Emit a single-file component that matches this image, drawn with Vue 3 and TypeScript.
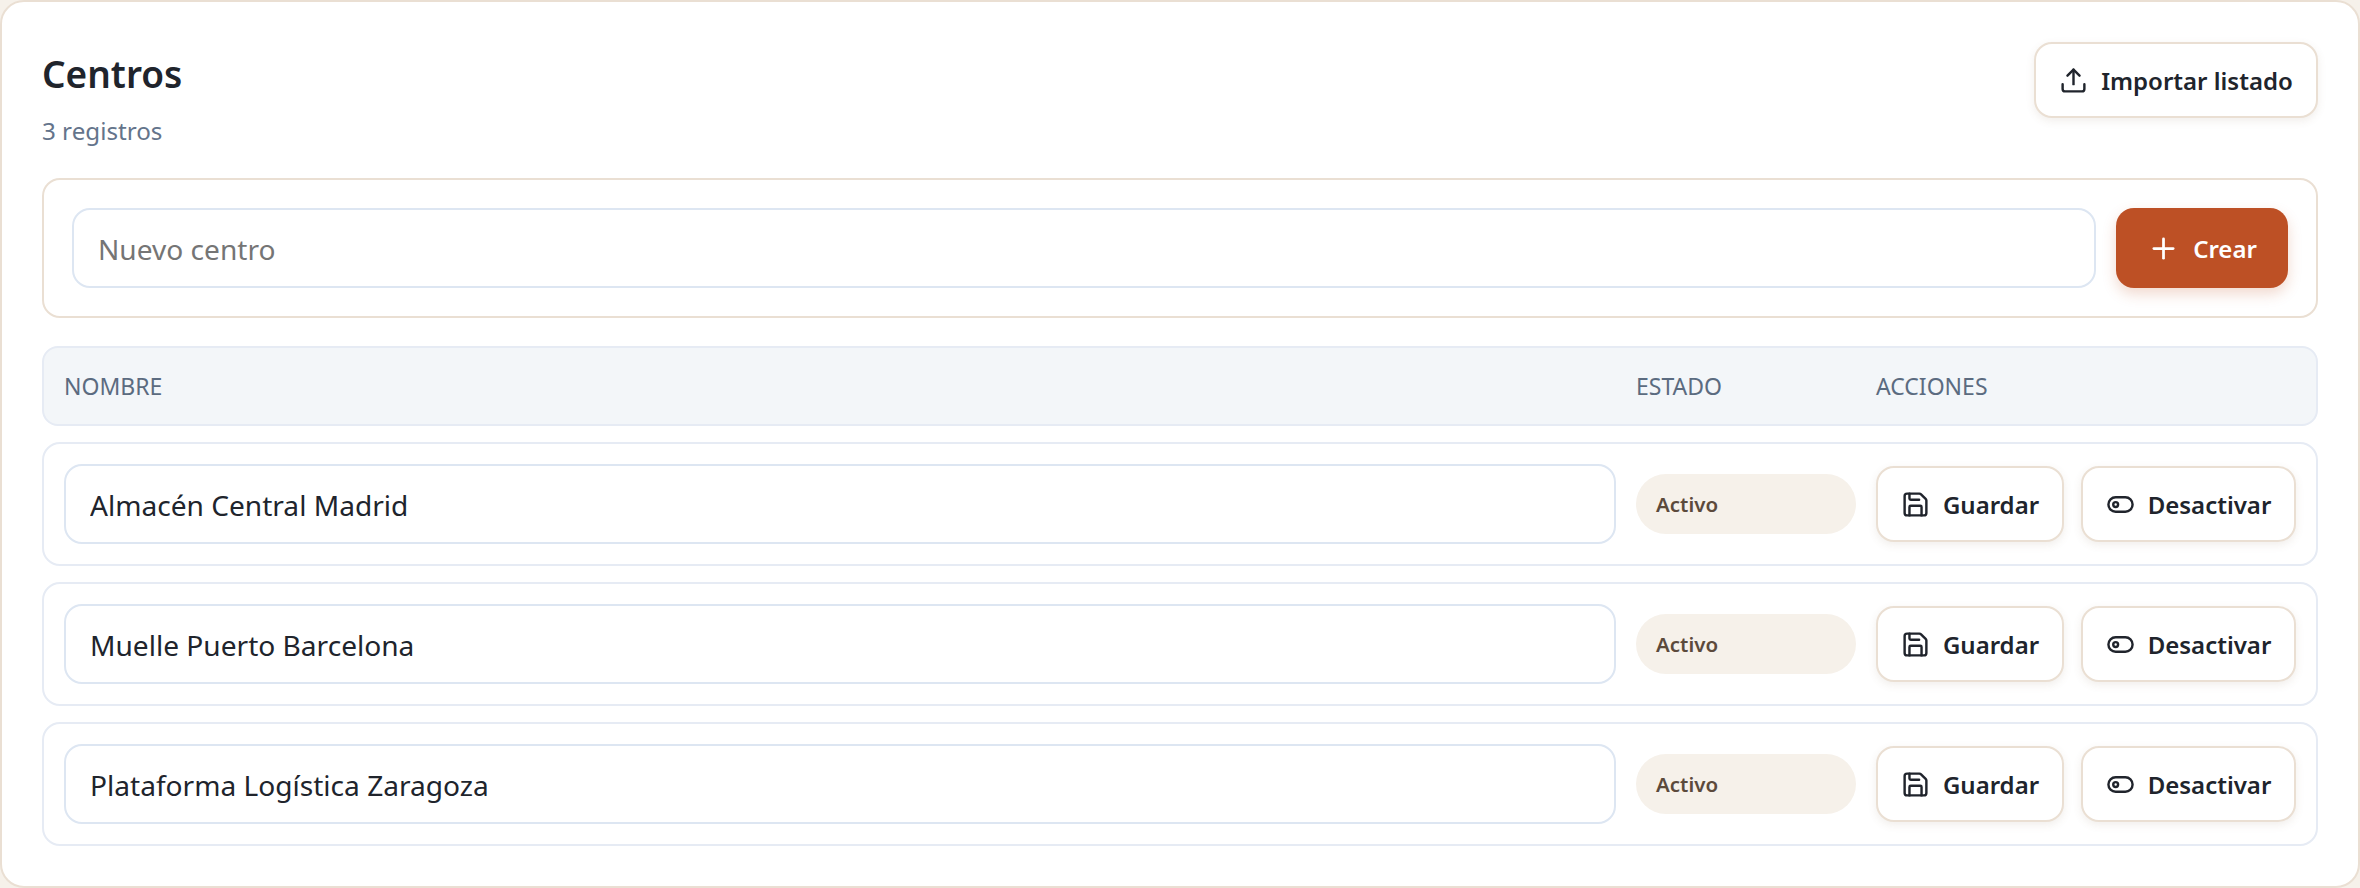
<script setup lang="ts">
const centros: string[] = ['Almacén Central Madrid', 'Muelle Puerto Barcelona', 'Plataforma Logística Zaragoza']
</script>

<template>
  <main class="card">
    <header class="head">
      <div class="titles">
        <h1>Centros</h1>
        <p>3 registros</p>
      </div>
      <button class="btn import" type="button">
        <svg class="ico" viewBox="0 0 24 24"><path d="M12 3v12" /><path d="m17 8-5-5-5 5" /><path d="M21 15v4a2 2 0 0 1-2 2H5a2 2 0 0 1-2-2v-4" /></svg>
        Importar listado
      </button>
    </header>

    <form class="create" @submit.prevent>
      <input class="field" placeholder="Nuevo centro" />
      <button class="btn primary" type="button">
        <svg class="ico plus" viewBox="0 0 24 24"><path d="M5 12h14" /><path d="M12 5v14" /></svg>
        Crear
      </button>
    </form>

    <div class="grid thead">
      <span>Nombre</span>
      <span>Estado</span>
      <span>Acciones</span>
    </div>

    <div v-for="c in centros" :key="c" class="grid row">
      <input class="field" :value="c" />
      <span class="badge">Activo</span>
      <div class="actions">
        <button class="btn save" type="button">
          <svg class="ico" viewBox="0 0 24 24"><path d="M15.2 3a2 2 0 0 1 1.4.6l3.8 3.8a2 2 0 0 1 .6 1.4V19a2 2 0 0 1-2 2H5a2 2 0 0 1-2-2V5a2 2 0 0 1 2-2z" /><path d="M17 21v-7a1 1 0 0 0-1-1H8a1 1 0 0 0-1 1v7" /><path d="M7 3v4a1 1 0 0 0 1 1h7" /></svg>
          Guardar
        </button>
        <button class="btn off" type="button">
          <svg class="ico" viewBox="0 0 24 24"><rect x="2" y="6" width="20" height="12" rx="6" /><circle cx="8" cy="12" r="2" /></svg>
          Desactivar
        </button>
      </div>
    </div>
  </main>
</template>

<style>
html, body { margin: 0; background: #f6f1ea; }
</style>

<style scoped>
.card {
  box-sizing: border-box;
  width: 2360px;
  height: 888px;
  padding: 40px;
  border: 2px solid #eadfd3;
  border-radius: 24px;
  background: #fff;
  display: flex;
  flex-direction: column;
  font-family: "Noto Sans", sans-serif;
  color: #20242c;
}
.head { display: flex; justify-content: space-between; align-items: flex-start; height: 108px; margin-bottom: 28px; }
.titles { padding-top: 9px; }
h1 { margin: 0; font-size: 37px; line-height: 46px; font-weight: 600; }
.titles p { margin: 18px 0 0; font-size: 24.2px; line-height: 32px; color: #64748b; }
.ico { width: 29px; height: 29px; flex: none; fill: none; stroke: currentColor; stroke-width: 2; stroke-linecap: round; stroke-linejoin: round; }
.plus { width: 33px; height: 33px; }
.btn {
  box-sizing: border-box;
  height: 76px;
  display: flex;
  align-items: center;
  justify-content: center;
  gap: 13px;
  border: 2px solid #eadfd3;
  border-radius: 18px;
  background: #fff;
  color: #20242c;
  font: 600 24px "Noto Sans", sans-serif;
  box-shadow: 0 3px 8px rgba(120, 90, 60, 0.1);
  padding: 0;
}
.import { width: 284px; padding-top: 1px; }
.create {
  box-sizing: border-box;
  height: 140px;
  padding: 28px;
  margin-bottom: 28px;
  border: 2px solid #eadfd3;
  border-radius: 18px;
  display: flex;
  gap: 20px;
}
.field {
  box-sizing: border-box;
  flex: 1;
  min-width: 0;
  height: 80px;
  padding: 2px 24px 0;
  border: 2px solid #dde6f2;
  border-radius: 18px;
  background: #fff;
  color: #20242c;
  font: 400 28.1px "Noto Sans", sans-serif;
  outline: none;
}
.field::placeholder { color: #757575; opacity: 1; }
.primary {
  width: 172px;
  height: 80px;
  border: none;
  background: #bd5025;
  color: #fff;
  gap: 13px;
  box-shadow: 0 6px 14px rgba(189, 80, 37, 0.22);
}
.grid { display: grid; grid-template-columns: 1fr 220px 420px; column-gap: 20px; align-items: center; box-sizing: border-box; }
.thead {
  height: 80px;
  padding: 0 20px;
  margin-bottom: 16px;
  border: 2px solid #e6ebf4;
  border-radius: 16px;
  background: #f3f6f9;
  color: #5b6b80;
  font-size: 23px;
  text-transform: uppercase;
}
.row {
  height: 124px;
  padding: 20px;
  margin-bottom: 16px;
  border: 2px solid #e6ebf4;
  border-radius: 18px;
}
.row:last-child { margin-bottom: 0; }
.badge {
  box-sizing: border-box;
  height: 60px;
  display: flex;
  align-items: center;
  padding: 0 20px;
  border-radius: 30px;
  background: #f6f1ea;
  color: #5c4a3c;
  font-size: 20.5px;
  font-weight: 600;
}
.actions { display: flex; justify-content: space-between; }
.save { width: 188px; }
.off { width: 215px; }
</style>
